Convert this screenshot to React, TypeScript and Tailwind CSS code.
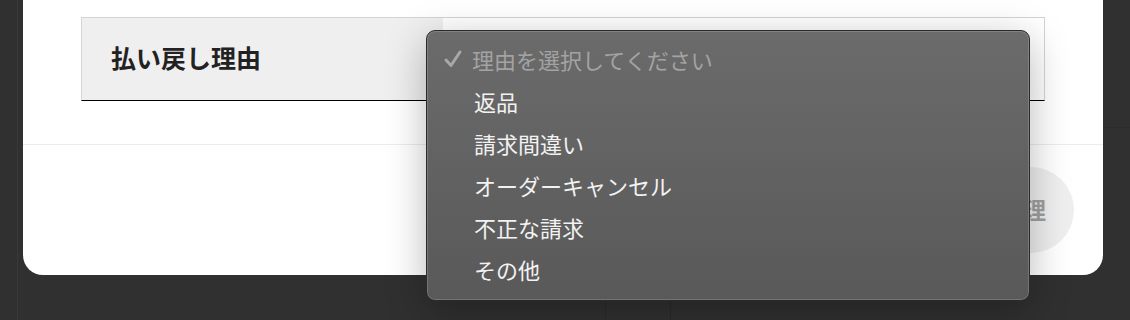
import React from 'react';

const options = ['返品', '請求間違い', 'オーダーキャンセル', '不正な請求', 'その他'];

function CheckMark() {
  return (
    <svg width="20" height="20" viewBox="0 0 20 20" className="shrink-0">
      <path d="M3 11 L8 16.5 L17 3" fill="none" stroke="#a8a8a8" strokeWidth="3" strokeLinecap="round" strokeLinejoin="round" />
    </svg>
  );
}

export default function App() {
  return (
    <div
      className="relative w-[1130px] h-[320px] overflow-hidden bg-[#303030]"
      style={{ fontFamily: '"Noto Sans CJK JP", "Noto Sans", sans-serif' }}
    >
      {/* page behind the overlay */}
      <div className="absolute left-[17px] top-0 h-full w-px bg-[#383838]" />
      <div className="absolute right-0 top-[127px] h-px w-[27px] bg-[#2b2b2b]" />
      <div className="absolute left-[605px] top-[275px] h-[45px] w-px bg-[#2a2a2a]" />
      <div className="absolute left-[670px] top-[275px] h-[45px] w-px bg-[#2a2a2a]" />

      {/* modal */}
      <div className="relative ml-[23px] flex h-[275px] w-[1080px] flex-col rounded-b-[20px] bg-white">
        <div className="px-[58px] pt-[17px]">
          <div className="flex h-[84px] border-l border-r border-t border-b border-[#d4d4d4] border-b-black">
            <div className="flex w-[361px] items-center bg-[#efefef] pb-[3px] pl-[29px] text-[25px] font-bold text-[#222]">
              払い戻し理由
            </div>
            <div className="flex-1 bg-white" />
          </div>
        </div>
        <div className="mt-[43px] h-px w-full bg-[#ececec]" />
        <div className="flex flex-1 items-center justify-end pr-[29px]">
          <div className="flex h-[86px] w-[200px] items-center justify-end rounded-full bg-[#efefef] pb-[2px] pr-[28px] text-[23px] font-bold text-[#a0a0a0]">
            返金処理
          </div>
        </div>
      </div>

      {/* native select menu */}
      <div className="absolute left-[426px] top-[30px] h-[271px] w-[604px] rounded-[9px] border border-[#2a2a2a] bg-gradient-to-b from-[#6b6b6b] to-[#595959] shadow-[0_10px_40px_rgba(0,0,0,0.28),inset_0_0_0_1px_rgba(255,255,255,0.16)]">
        <div className="flex flex-col pt-[7px]">
          <div className="flex h-[42px] items-center gap-[9px] pl-[16px] text-[22px] text-[#a3a3a3]">
            <CheckMark />
            <span>理由を選択してください</span>
          </div>
          {options.map((o) => (
            <div key={o} className="flex h-[42px] items-center pl-[47px] text-[22px] text-[#f2f2f2]">
              {o}
            </div>
          ))}
        </div>
      </div>
    </div>
  );
}
